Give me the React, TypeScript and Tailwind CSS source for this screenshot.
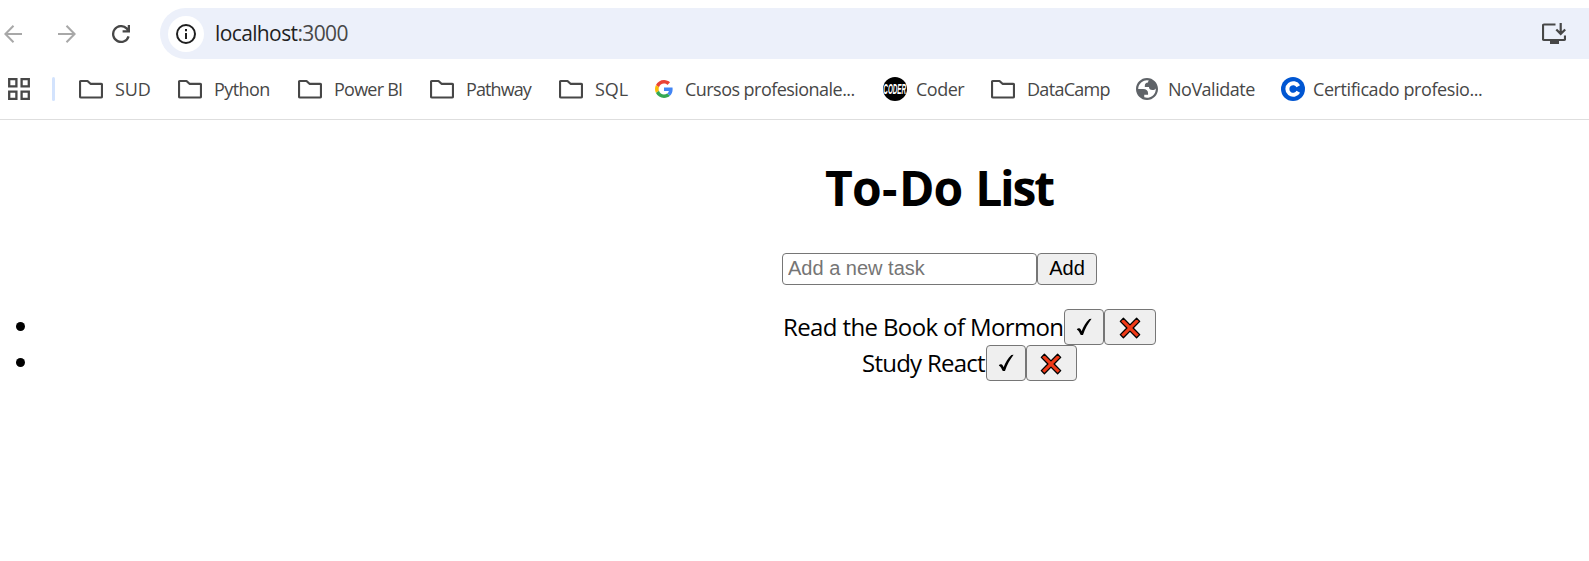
import React from "react";

const ICON = "#474747";

function Folder() {
  return (
    <svg className="h-6 w-6 shrink-0" viewBox="0 0 24 24" fill="none" stroke={ICON} strokeWidth="2.2" strokeLinejoin="round">
      <path d="M2 4H8.500L11.500 6.800H22A1 1 0 0 1 23 7.800V19.500A1 1 0 0 1 22 20.500H2A1 1 0 0 1 1 19.500V5A1 1 0 0 1 2 4Z" />
    </svg>
  );
}

function GoogleIcon() {
  return (
    <svg className="h-[18px] w-[18px] shrink-0" viewBox="0 0 48 48">
      <path fill="#EA4335" d="M24 9.5c3.54 0 6.71 1.22 9.21 3.6l6.85-6.85C35.9 2.38 30.47 0 24 0 14.62 0 6.51 5.38 2.56 13.22l7.98 6.19C12.43 13.72 17.74 9.5 24 9.5z" />
      <path fill="#4285F4" d="M46.98 24.55c0-1.57-.15-3.09-.38-4.55H24v9.02h12.94c-.58 2.96-2.26 5.48-4.78 7.18l7.73 6c4.51-4.18 7.09-10.36 7.09-17.65z" />
      <path fill="#FBBC05" d="M10.53 28.59c-.48-1.45-.76-2.99-.76-4.59s.27-3.14.76-4.59l-7.98-6.19C.92 16.46 0 20.12 0 24c0 3.88.92 7.54 2.56 10.78l7.97-6.19z" />
      <path fill="#34A853" d="M24 48c6.48 0 11.93-2.13 15.89-5.81l-7.73-6c-2.15 1.45-4.92 2.3-8.16 2.3-6.26 0-11.57-4.22-13.47-9.91l-7.98 6.19C6.51 42.62 14.62 48 24 48z" />
    </svg>
  );
}

function CoderIcon() {
  return (
    <svg className="h-6 w-6 shrink-0" viewBox="0 0 24 24">
      <circle cx="12" cy="12" r="12" fill="#000" />
      <text
        transform="translate(11.7 16.8) scale(1 2.2)"
        textAnchor="middle"
        fill="#fff"
        className="font-['Liberation_Sans',sans-serif] text-[6.3px] font-bold italic"
      >
        CODER
      </text>
    </svg>
  );
}

function GlobeIcon() {
  return (
    <svg className="h-[22px] w-[22px] shrink-0" viewBox="2 2 20 20">
      <path fillRule="evenodd" fill="#5f6368" d="M12 2C6.48 2 2 6.48 2 12s4.48 10 10 10 10-4.48 10-10S17.52 2 12 2zM4 12h4.4c3.407.022 4.922 1.73 4.543 5.127H9.488v2.47a8.004 8.004 0 0 0 10.498-8.083C19.327 12.504 18.332 13 17 13c-2.137 0-3.206-.916-3.206-2.75h-3.748c-.274-2.728.683-4.092 2.87-4.092 0-.975.327-1.597.811-1.97A8.004 8.004 0 0 0 4 12z" />
    </svg>
  );
}

function CourseraIcon() {
  return (
    <svg className="h-6 w-6 shrink-0" viewBox="0 0 24 24">
      <circle cx="12" cy="12" r="12" fill="#0056d2" />
      <path d="M17.3 9.3A5.8 5.8 0 1 0 17.3 14.7" fill="none" stroke="#fff" strokeWidth="4" />
    </svg>
  );
}

type Mark = { label: string; icon: React.ReactNode; box: string; text: string };

const marks: Mark[] = [
  { label: "SUD", icon: <Folder />, box: "w-[99px] gap-3", text: "tracking-[-0.1px]" },
  { label: "Python", icon: <Folder />, box: "w-[120px] gap-3", text: "tracking-[-0.6px]" },
  { label: "Power BI", icon: <Folder />, box: "w-[132px] gap-3", text: "tracking-[-0.75px]" },
  { label: "Pathway", icon: <Folder />, box: "w-[129px] gap-3", text: "tracking-[-0.9px]" },
  { label: "SQL", icon: <Folder />, box: "w-[96px] gap-3", text: "" },
  { label: "Cursos profesionale...", icon: <GoogleIcon />, box: "w-[228px] gap-3", text: "tracking-[-0.54px]" },
  { label: "Coder", icon: <CoderIcon />, box: "w-[108px] gap-[9px]", text: "tracking-[-0.5px]" },
  { label: "DataCamp", icon: <Folder />, box: "w-[145px] gap-3", text: "tracking-[-0.7px]" },
  { label: "NoValidate", icon: <GlobeIcon />, box: "w-[145px] gap-2.5", text: "tracking-[-0.5px]" },
  { label: "Certificado profesio...", icon: <CourseraIcon />, box: "w-[210px] gap-2", text: "tracking-[-0.42px]" },
];

const button = "flex items-center justify-center rounded-[4px] border-[1.5px] border-[#767676] bg-[#efefef]";

function Task({ label, text, del }: { label: string; text: string; del: string }) {
  return (
    <li className="flex h-9 items-center">
      <span className="mb-px ml-4 h-[9px] w-[9px] shrink-0 rounded-full bg-black" />
      <span className={`shrink-0 whitespace-nowrap text-2xl ${text}`}>{label}</span>
      <button className={`${button} h-9 w-10`}>
        <svg className="h-5 w-4" viewBox="0 0 16 20">
          <path d="M0.800 12.400C1.800 10.800 3.900 10.800 4.800 12.600L5.600 14.200C7.400 9.600 10 4.800 13.400 2L15.600 1.800C12 6.400 9 12 7 18H4.800C3.600 15.600 2.800 13.600 0.800 12.400Z" />
        </svg>
      </button>
      <button className={`${button} h-9 pt-px ${del}`}>
        <svg className="h-[22px] w-[22px]" viewBox="0 0 22 22">
          <path d="M4.400 1.300L11 7.900L17.600 1.300L20.700 4.400L14.100 11L20.700 17.600L17.600 20.700L11 14.100L4.400 20.700L1.300 17.600L7.900 11L1.300 4.400Z" fill="#f03a17" stroke="#000" strokeWidth="1.300" strokeLinejoin="round" />
        </svg>
      </button>
    </li>
  );
}

export default function App() {
  return (
    <div className="h-[561px] w-full overflow-hidden bg-white font-['Open_Sans','Noto_Sans',sans-serif] text-black">
      <div className="flex h-[59px] items-center pt-2">
        <svg className="ml-1 h-[18px] w-[18px] shrink-0" viewBox="0 0 18 18" fill="none" stroke="#a8a8a8" strokeWidth="2">
          <path d="M18 9H1.500M9.500 .800L1.400 9L9.500 17.200" />
        </svg>
        <svg className="ml-9 h-[18px] w-[18px] shrink-0" viewBox="0 0 18 18" fill="none" stroke="#a8a8a8" strokeWidth="2">
          <path d="M0 9H16.500M8.500 .800L16.600 9L8.500 17.200" />
        </svg>
        <svg className="ml-9 h-[18px] w-[18px] shrink-0" viewBox="0 0 18 18" fill="none" stroke={ICON} strokeWidth="2.300">
          <path d="M16.600 11.400A7.900 7.900 0 1 1 14.600 3.400L16.600 5.600M16.900 0V6.400H10.600" />
        </svg>
        <div className="ml-[30px] flex h-[51px] flex-1 items-center rounded-l-full bg-[#ecf0fa]">
          <span className="ml-2 flex h-9 w-9 items-center justify-center rounded-full bg-white">
            <svg className="h-5 w-5" viewBox="0 0 20 20" fill="none" stroke="#1f1f1f" strokeWidth="2">
              <circle cx="10" cy="10" r="9" />
              <path d="M10 9V15M10 5V7.200" />
            </svg>
          </span>
          <span className="ml-[11px] text-[21px] tracking-[-0.62px] text-[#1f1f1f]">
            localhost<span className="text-[#474747]">:3000</span>
          </span>
          <svg className="ml-auto mr-[23px] h-[22px] w-6" viewBox="0 0 24 22" fill="none" stroke={ICON} strokeWidth="2.200">
            <path d="M13.500 1.500H2A1 1 0 0 0 1 2.500V16A1 1 0 0 0 2 17H22A1 1 0 0 0 23 16V12.500M18.700 0V10.500M14.300 6.500L18.700 10.900L23.200 6.500" />
            <path d="M8 17H17V21H8Z" fill={ICON} stroke="none" />
          </svg>
        </div>
      </div>

      <div className="flex h-[61px] items-center border-b border-[#dedede] pb-[1px]">
        <svg className="ml-2 h-[22px] w-[22px] shrink-0" viewBox="0 0 22 22" fill="none" stroke={ICON} strokeWidth="2.300">
          <path d="M1.200 1.200H8.400V8.400H1.200ZM13.600 1.200H20.800V8.400H13.600ZM1.200 13.600H8.400V20.800H1.200ZM13.600 13.600H20.800V20.800H13.600Z" />
        </svg>
        <span className="ml-[22px] mr-6 h-6 w-[3px] shrink-0 rounded-full bg-[#d3e3fd]" />
        {marks.map((m) => (
          <div key={m.label} className={`flex shrink-0 items-center whitespace-nowrap text-lg text-[#474747] ${m.box}`}>
            {m.icon}
            <span className={m.text}>{m.label}</span>
          </div>
        ))}
      </div>

      <h1 className="mt-[36px] pl-[825px] text-5xl leading-[64px] font-bold tracking-[-0.8px] whitespace-nowrap">
        To<span className="ml-px tracking-[1.5px]">-</span>Do{" "}
        <span className="ml-px tracking-[-2.2px]">List</span>
      </h1>

      <div className="mt-[33px] flex pl-[782px] font-['Liberation_Sans',Arial,sans-serif] text-xl leading-none">
        <input
          className="h-8 w-[255px] rounded-[4px] border-[1.5px] border-[#767676] bg-white px-[5px] pb-0.5 placeholder:text-[#757575]"
          placeholder="Add a new task"
        />
        <button className={`${button} h-8 w-[60px] pb-0.5`}>Add</button>
      </div>

      <ul className="mt-6">
        <Task label="Read the Book of Mormon" text="ml-[758px] w-[281px] tracking-[-0.62px]" del="w-[52px]" />
        <Task label="Study React" text="ml-[837px] w-[124px] tracking-[-0.75px]" del="w-[51px] pr-px" />
      </ul>
    </div>
  );
}
